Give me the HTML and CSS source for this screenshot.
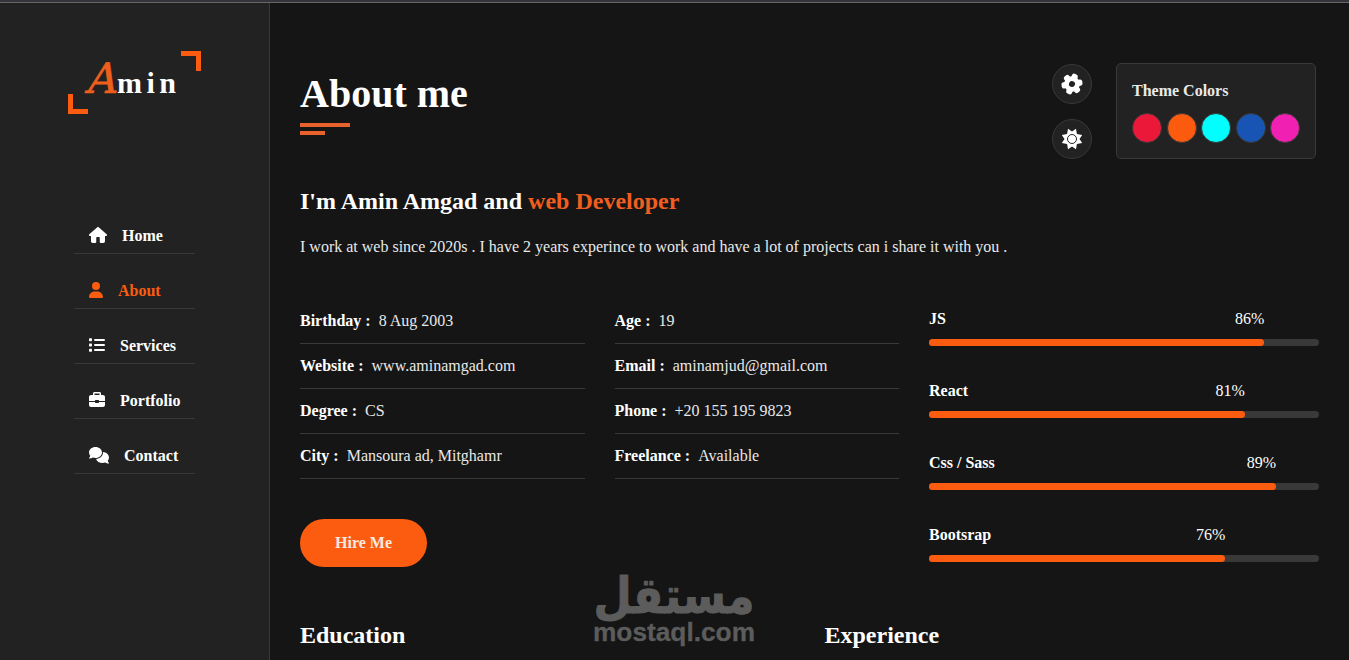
FILE: index.html
```html
<!DOCTYPE html>
<html lang="en">
<head>
    <meta charset="UTF-8">
    <meta name="viewport" content="width=device-width, initial-scale=1.0">
    <title>Amin - About me</title>
    <link rel="stylesheet" href="styles.css">
</head>
<body>
    <div class="main-container">
        <aside class="aside">
            <div class="logo">
                <a href="#"><span>A</span>min</a>
            </div>
            <ul class="nav">
                <li><a href="#home">
                    <svg width="18" height="16" viewBox="0 0 576 512"><path d="M575.8 255.5c0 18-15 32.1-32 32.1h-32l.7 160.2c0 35-22 64.200-54 64.200H376c-20 0-32-12-32-32V352c0-18-12-32-32-32h-48c-20 0-32 14-32 32v128c0 20-12 32-32 32h-80c-34 0-56-28-56-64V287.600H32c-18 0-32-14-32-32.100 0-9 3-17 10-24L266.400 8c7-7 15-8 22-8s15 2 21 7l255.400 224.500c8 7 12 15 11 24z"/></svg>
                    Home</a></li>
                <li><a href="#about" class="active">
                    <svg width="14" height="16" viewBox="0 0 448 512"><path d="M224 256a128 128 0 1 0 0-256 128 128 0 1 0 0 256zm-45.700 48C79.800 304 0 383.800 0 482.300 0 498.700 13.300 512 29.700 512h388.600c16.400 0 29.700-13.300 29.700-29.700C448 383.800 368.200 304 269.700 304h-91.400z"/></svg>
                    About</a></li>
                <li><a href="#services">
                    <svg width="16" height="16" viewBox="0 0 512 512"><rect y="40" width="96" height="96" rx="24"/><rect y="208" width="96" height="96" rx="24"/><rect y="376" width="96" height="96" rx="24"/><rect x="160" y="64" width="352" height="64" rx="32"/><rect x="160" y="224" width="352" height="64" rx="32"/><rect x="160" y="384" width="352" height="64" rx="32"/></svg>
                    Services</a></li>
                <li><a href="#portfolio">
                    <svg width="16" height="16" viewBox="0 0 512 512"><path fill-rule="evenodd" d="M176 0h160c26 0 48 22 48 48v48h64c35 0 64 29 64 64v128H320v-16c0-9-7-16-16-16h-96c-9 0-16 7-16 16v16H0V160c0-35 29-64 64-64h64V48c0-26 22-48 48-48zm0 48v48h160V48zM0 320h192v16c0 9 7 16 16 16h96c9 0 16-7 16-16v-16h192v96c0 35-29 64-64 64H64c-35 0-64-29-64-64z"/></svg>
                    Portfolio</a></li>
                <li><a href="#contact">
                    <svg width="20" height="16" viewBox="0 0 640 512"><path d="M208 352c115 0 208-79 208-176S323 0 208 0 0 79 0 176c0 38 14 74 39 103-2 24-14 42-32 61-10 12-4 28 11 28 42 0 75-14 104-31 27 10 56 15 86 15zM448 176c0 112-99 199-221 208 25 76 110 128 205 128 31 0 60-6 86-16 29 16 62 32 104 32 15 0 22-17 11-28-18-19-30-38-32-61 25-29 39-64 39-103 0-93-86-169-194-175 1 5 2 10 2 15z"/></svg>
                    Contact</a></li>
            </ul>
        </aside>

        <main class="about">
            <div class="section-title">
                <h1>About me</h1>
            </div>

            <div class="about-text">
                <h2>I'm Amin Amgad and <span>web Developer</span></h2>
                <p>I work at web since 2020s . I have 2 years experince to work and have a lot of projects can i share it with you .</p>
            </div>

            <div class="about-content">
                <div class="personal-info">
                    <div class="info-list">
                        <p>Birthday : <span>8 Aug 2003</span></p>
                        <p>Age : <span>19</span></p>
                        <p>Website : <span>www.aminamgad.com</span></p>
                        <p>Email : <span>aminamjud@gmail.com</span></p>
                        <p>Degree : <span>CS</span></p>
                        <p>Phone : <span>+20 155 195 9823</span></p>
                        <p>City : <span>Mansoura ad, Mitghamr</span></p>
                        <p>Freelance : <span>Available</span></p>
                    </div>
                    <a href="#contact" class="btn">Hire Me</a>
                </div>
                <div class="skills">
                    <div class="skill-item">
                        <h5>JS</h5>
                        <div class="progress">
                            <div class="progress-in" style="width: 86%"><span>86%</span></div>
                        </div>
                    </div>
                    <div class="skill-item">
                        <h5>React</h5>
                        <div class="progress">
                            <div class="progress-in" style="width: 81%"><span>81%</span></div>
                        </div>
                    </div>
                    <div class="skill-item">
                        <h5>Css / Sass</h5>
                        <div class="progress">
                            <div class="progress-in" style="width: 89%"><span>89%</span></div>
                        </div>
                    </div>
                    <div class="skill-item">
                        <h5>Bootsrap</h5>
                        <div class="progress">
                            <div class="progress-in" style="width: 76%"><span>76%</span></div>
                        </div>
                    </div>
                </div>
            </div>

            <div class="timeline">
                <h3>Education</h3>
                <h3>Experience</h3>
            </div>
        </main>
    </div>

    <div class="style-switcher">
        <div class="switcher-icons">
            <button class="s-icon" type="button" aria-label="Settings">
                <svg width="22" height="22" viewBox="-12 -12 24 24">
                    <g transform="rotate(20)">
                        <circle r="8.500"/>
                        <rect x="-3.400" y="-11.500" width="6.800" height="23" rx="2.500"/>
                        <rect x="-3.400" y="-11.500" width="6.800" height="23" rx="2.500" transform="rotate(60)"/>
                        <rect x="-3.400" y="-11.500" width="6.800" height="23" rx="2.500" transform="rotate(120)"/>
                        <circle class="hole" r="3.300"/>
                    </g>
                </svg>
            </button>
            <button class="s-icon" type="button" aria-label="Day and night">
                <svg width="22" height="22" viewBox="-11 -11 22 22">
                    <path d="M0-7.500l4-2.700.9 5.300 5.300.9L7.500 0l2.700 4-5.300.9-.9 5.300L0 7.500l-4 2.700-.9-5.300-5.300-.9L-7.500 0l-2.700-4 5.300-.9.9-5.300z"/>
                    <circle class="ring" r="4.500"/>
                </svg>
            </button>
        </div>
        <div class="theme-colors">
            <h4>Theme Colors</h4>
            <div class="colors">
                <span class="color-1"></span>
                <span class="color-2"></span>
                <span class="color-3"></span>
                <span class="color-4"></span>
                <span class="color-5"></span>
            </div>
        </div>
    </div>

    <div class="watermark">
        <svg width="164" height="80" viewBox="0 0 164 80">
            <text class="wm-ar" x="82" y="43" text-anchor="middle" textLength="161" lengthAdjust="spacingAndGlyphs">مستقل</text>
            <text class="wm-en" x="1" y="71" textLength="162" lengthAdjust="spacingAndGlyphs">mostaql.com</text>
        </svg>
    </div>
</body>
</html>
```
FILE: styles.css
```css
:root {
    --main-color: #fc5c10;
    --bg-black-900: #151515;
    --bg-black-100: #222222;
    --bg-black-50: #393939;
}

*,
*::before,
*::after {
    margin: 0;
    padding: 0;
    box-sizing: border-box;
}

body {
    height: 660px;
    overflow: hidden;
    background-color: var(--bg-black-900);
    border-top: 2px solid #35343a;
    font-family: "Liberation Serif", "Times New Roman", serif;
    font-size: 16px;
    line-height: 1.5;
    color: #e9e9e9;
}

a {
    text-decoration: none;
    color: #fff;
}

ul {
    list-style: none;
}

.main-container {
    display: flex;
    height: 658px;
    border-top: 1px solid #666;
}

/* aside */
.aside {
    width: 270px;
    flex-shrink: 0;
    padding-top: 48px;
    background-color: var(--bg-black-100);
    border-right: 1px solid var(--bg-black-50);
    display: flex;
    flex-direction: column;
    align-items: center;
}

.logo {
    position: relative;
    width: 133px;
    height: 63px;
    padding: 9px 0 0 17px;
}

.logo a {
    display: flex;
    align-items: flex-start;
    font-size: 30px;
    font-weight: bold;
    letter-spacing: 4.500px;
    line-height: 45px;
}

.logo span {
    width: 32px;
    font-family: "Z003", "DejaVu Math TeX Gyre", "Liberation Serif", cursive;
    font-size: 42px;
    font-weight: normal;
    font-style: italic;
    letter-spacing: 0;
    line-height: 42px;
    color: #ee5f1c;
    -webkit-text-stroke: .6px #ee5f1c;
}

.logo::before,
.logo::after {
    content: "";
    position: absolute;
    width: 20px;
    height: 20px;
}

.logo::before {
    left: 0;
    bottom: 0;
    border-left: 5px solid var(--main-color);
    border-bottom: 5px solid var(--main-color);
}

.logo::after {
    right: 0;
    top: 0;
    border-right: 5px solid var(--main-color);
    border-top: 5px solid var(--main-color);
}

.nav {
    width: 121px;
    margin-top: 99px;
}

.nav a {
    display: flex;
    align-items: center;
    gap: 15px;
    height: 41px;
    margin-bottom: 14px;
    padding: 5px 0 0 15px;
    border-bottom: 1px solid var(--bg-black-50);
    font-weight: bold;
    line-height: 35px;
}

.nav svg {
    margin-bottom: 2px;
    fill: currentColor;
    overflow: visible;
}

.nav .active {
    color: var(--main-color);
}

/* about */
.about {
    flex: 1;
    padding: 60px 30px 0;
}

.section-title {
    position: relative;
    height: 72px;
}

.section-title h1 {
    font-size: 40px;
    line-height: 62px;
    color: #fff;
}

.section-title::before,
.section-title::after {
    content: "";
    position: absolute;
    left: 0;
    height: 4px;
    background-color: #e8622c;
}

.section-title::before {
    top: 60px;
    width: 50px;
}

.section-title::after {
    top: 68px;
    width: 25px;
}

.about-text {
    margin-top: 48px;
}

.about-text h2 {
    font-size: 24px;
    line-height: 36px;
    color: #fff;
}

.about-text h2 span {
    color: #f05e20;
}

.about-text p {
    margin-top: 16px;
}

.about-content {
    display: flex;
    gap: 30px;
    margin-top: 40px;
}

.personal-info {
    width: 599px;
}

.info-list {
    display: grid;
    grid-template-columns: 1fr 1fr;
    column-gap: 30px;
}

.info-list p {
    height: 45px;
    padding-top: 10px;
    border-bottom: 1px solid var(--bg-black-50);
    font-weight: bold;
    color: #fff;
}

.info-list span {
    margin-left: 4px;
    font-weight: normal;
    color: #e9e9e9;
}

.btn {
    display: inline-block;
    margin-top: 40px;
    padding: 12px 35px;
    border-radius: 40px;
    background-color: var(--main-color);
    font-weight: bold;
    color: #f6e9e0;
}

.skills {
    width: 390px;
}

.skill-item {
    height: 72px;
    padding-top: 8px;
}

.skill-item h5 {
    height: 32px;
    font-size: 16px;
    color: #fff;
}

.progress {
    height: 7px;
    border-radius: 4px;
    background-color: var(--bg-black-50);
}

.progress-in {
    position: relative;
    height: 100%;
    border-radius: 4px;
    background-color: var(--main-color);
}

.progress-in span {
    position: absolute;
    right: 0;
    bottom: 18px;
    line-height: 18px;
    color: #fff;
}

.timeline {
    display: grid;
    grid-template-columns: 1fr 1fr;
    column-gap: 30px;
    margin-top: 30px;
}

.timeline h3 {
    font-size: 24px;
    color: #fff;
}

/* style switcher */
.style-switcher {
    position: fixed;
    top: 63px;
    right: 33px;
    display: flex;
    gap: 24px;
}

.switcher-icons {
    display: flex;
    flex-direction: column;
    gap: 15px;
    padding-top: 1px;
}

.s-icon {
    display: flex;
    align-items: center;
    justify-content: center;
    width: 40px;
    height: 40px;
    border: 1px solid var(--bg-black-50);
    border-radius: 50%;
    background-color: var(--bg-black-100);
}

.s-icon svg {
    fill: #fff;
}

.s-icon .hole {
    fill: var(--bg-black-100);
}

.s-icon .ring {
    fill: #fff;
    stroke: var(--bg-black-100);
    stroke-width: 1;
}

.theme-colors {
    width: 200px;
    height: 96px;
    padding: 15px;
    border: 1px solid var(--bg-black-50);
    border-radius: 5px;
    background-color: var(--bg-black-100);
}

.theme-colors h4 {
    line-height: 24px;
}

.colors {
    display: flex;
    justify-content: space-between;
    margin-top: 10px;
}

.colors span {
    width: 30px;
    height: 30px;
    border: 1px solid var(--bg-black-50);
    border-radius: 50%;
}

.colors .color-1 { background-color: #ec1839; }
.colors .color-2 { background-color: #fa5b0f; }
.colors .color-3 { background-color: #00ffff; }
.colors .color-4 { background-color: #1854b4; }
.colors .color-5 { background-color: #f021b2; }

.watermark {
    position: absolute;
    left: 592px;
    top: 570px;
    height: 80px;
}

.watermark svg {
    overflow: visible;
}

.watermark text {
    fill: #5c5c5c;
    stroke: #5c5c5c;
    stroke-linejoin: round;
    font-weight: bold;
}

.wm-ar {
    font-family: "DejaVu Sans", sans-serif;
    font-size: 50px;
    stroke-width: 1px;
}

.wm-en {
    font-family: "Liberation Sans", Arial, sans-serif;
    font-size: 25px;
    stroke-width: .3px;
}
```
